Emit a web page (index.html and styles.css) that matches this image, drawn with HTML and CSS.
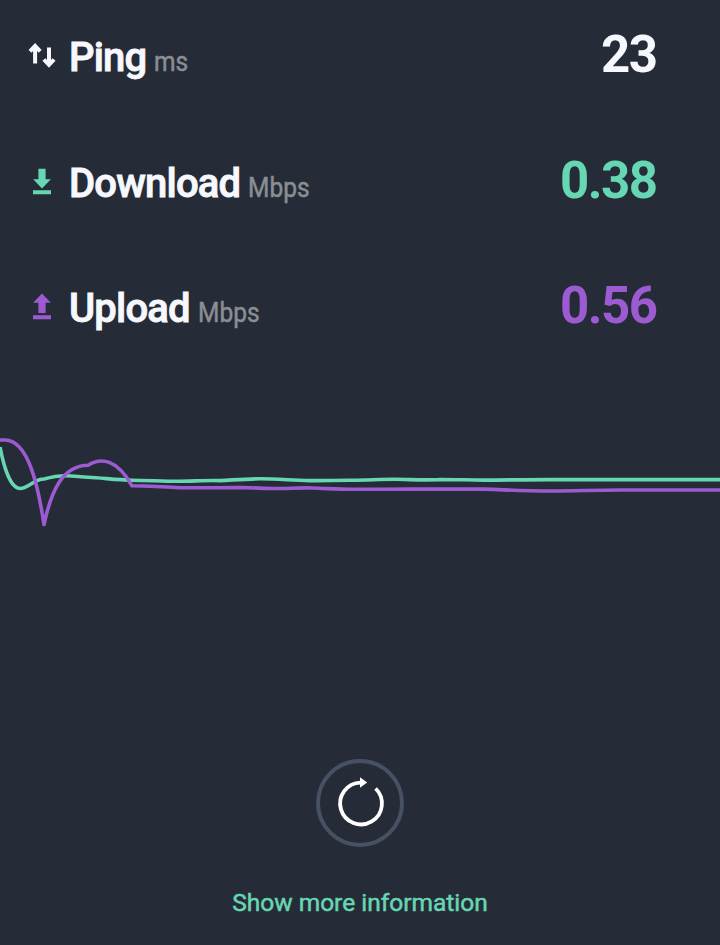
FILE: index.html
```html
<!DOCTYPE html>
<html lang="en">
<head>
<meta charset="utf-8">
<title>Speed test</title>
<link rel="stylesheet" href="styles.css">
</head>
<body>
<main class="app">
  <section class="metrics">
    <div class="metric ping">
      <svg class="icon" viewBox="0 0 30 30"><g fill="none" stroke="currentColor" stroke-width="4"><path d="M8.1 22.500V5.500M3 10.400l5.100-5.400 5.100 5.400M22 6.500v17M16.900 18.500l5.100 5.400 5.100-5.400"/></g></svg>
      <h2 class="label">Ping</h2><span class="unit">ms</span>
      <strong class="value">23</strong>
    </div>
    <div class="metric download">
      <svg class="icon" viewBox="0 0 30 30"><path fill="currentColor" d="M11.400 1.700h7.200v10.500h5.200L15 21.400l-8.800-9.200h5.200zM6 23.300h18v4H6z"/></svg>
      <h2 class="label">Download</h2><span class="unit">Mbps</span>
      <strong class="value">0.38</strong>
    </div>
    <div class="metric upload">
      <svg class="icon" viewBox="0 0 30 30"><path fill="currentColor" d="M15 1.600l8.800 9.200h-5.200v10.300h-7.200V10.800H6.200zM6 23.300h18v3.900H6z"/></svg>
      <h2 class="label">Upload</h2><span class="unit">Mbps</span>
      <strong class="value">0.56</strong>
    </div>
  </section>
  <svg class="chart" viewBox="0 425 720 110">
    <g fill="none" stroke-width="3.6" stroke-linejoin="round">
      <path stroke="#66d6b3" d="M0 447C5 473 12 488.500 20 488.500C28 488.500 34 479 44 479C51 477 58 475.700 66 475.700C74 475.700 80 477 88 477.300C103 478 117 480 132 480.200C148 480.400 164 481.300 176 481.300C192 481.300 207 480 220 480.600C233 480 245 478.800 260 478.800C280 478.800 293 480.600 309 480.600C322 480.800 338 480.200 352 480.300C368 480.200 380 479.300 395 479.300C410 479.400 427 480.500 440 479.500C457 479.500 470 480.100 484 480.100C508 480 522 479.600 550 479.600L720 479.600"/>
      <path stroke="#9d5bd2" d="M0 440H5C28 440 38 485 44 524.500C51 492 62 465.500 88 465.300C101 457 117 459 132 485.800C149 486.200 165 486.900 180 487.700C202 488.100 220 487.500 242 487.600C255 487.700 264 488.500 275 488.500C287 488.600 300 487.600 312 488C328 488.500 338 489.300 354 489.300C374 489.300 390 489.100 410 489.100H484C505 489.700 522 491 550 491C577 491 592 490 620 490H720"/>
    </g>
  </svg>
  <footer class="actions">
    <button class="restart" aria-label="Restart test">
      <svg class="restart-icon" viewBox="0 0 50 50"><path fill="none" stroke="#fff" stroke-width="3.800" d="M40.600 10.500A20.900 20.900 0 1 1 25.500 4.600"/><path fill="#fff" d="M25 -.8l7.200 5.300L25 9.700z"/></svg>
    </button>
    <a class="more">Show more information</a>
  </footer>
</main>
</body>
</html>
```

FILE: styles.css
```css
* { box-sizing: border-box; }
body {
  margin: 0;
  background: #262c37;
  color: #f6f8fd;
  font-family: Roboto, sans-serif;
}
.app {
  height: 945px;
  display: flex;
  flex-direction: column;
  overflow: hidden;
}
.metrics {
  display: grid;
  grid-auto-rows: 60px;
  row-gap: 65.5px;
  padding: 24px 63.5px 0 27px;
}
.metric {
  display: flex;
  align-items: baseline;
  line-height: 60px;
}
.icon {
  width: 30px;
  height: 30px;
  margin-right: 12px;
  align-self: flex-start;
  margin-top: 17px;
  overflow: visible;
}
.label {
  margin: 0;
  font-size: 40px;
  font-weight: 500;
  letter-spacing: -.8px;
  -webkit-text-stroke: .9px currentColor;
}
.unit {
  margin-left: 8px;
  font-size: 28.5px;
  color: #8b8e94;
  -webkit-text-stroke: .5px currentColor;
  transform: scaleX(.86);
  transform-origin: left;
}
.value {
  margin-left: auto;
  font-size: 51px;
  font-weight: 700;
  letter-spacing: -1.5px;
  transform: translateY(.7px);
}
.download .icon, .download .value { color: #66d6b3; }
.upload .icon, .upload .value { color: #9d5bd2; }
.chart {
  display: block;
  width: 720px;
  height: 110px;
  margin-top: 90px;
  flex: none;
}
.actions {
  display: flex;
  flex-direction: column;
  align-items: center;
  margin-top: 224px;
}
.restart {
  width: 88px;
  height: 88px;
  padding: 0;
  border: 4px solid #465164;
  border-radius: 50%;
  background: none;
  display: grid;
  place-items: center;
}
.restart-icon {
  width: 50px;
  height: 50px;
  overflow: visible;
}
.more {
  margin-top: 41px;
  line-height: 30px;
  font-size: 24.5px;
  -webkit-text-stroke: .5px currentColor;
  color: #66d6b3;
}
```
